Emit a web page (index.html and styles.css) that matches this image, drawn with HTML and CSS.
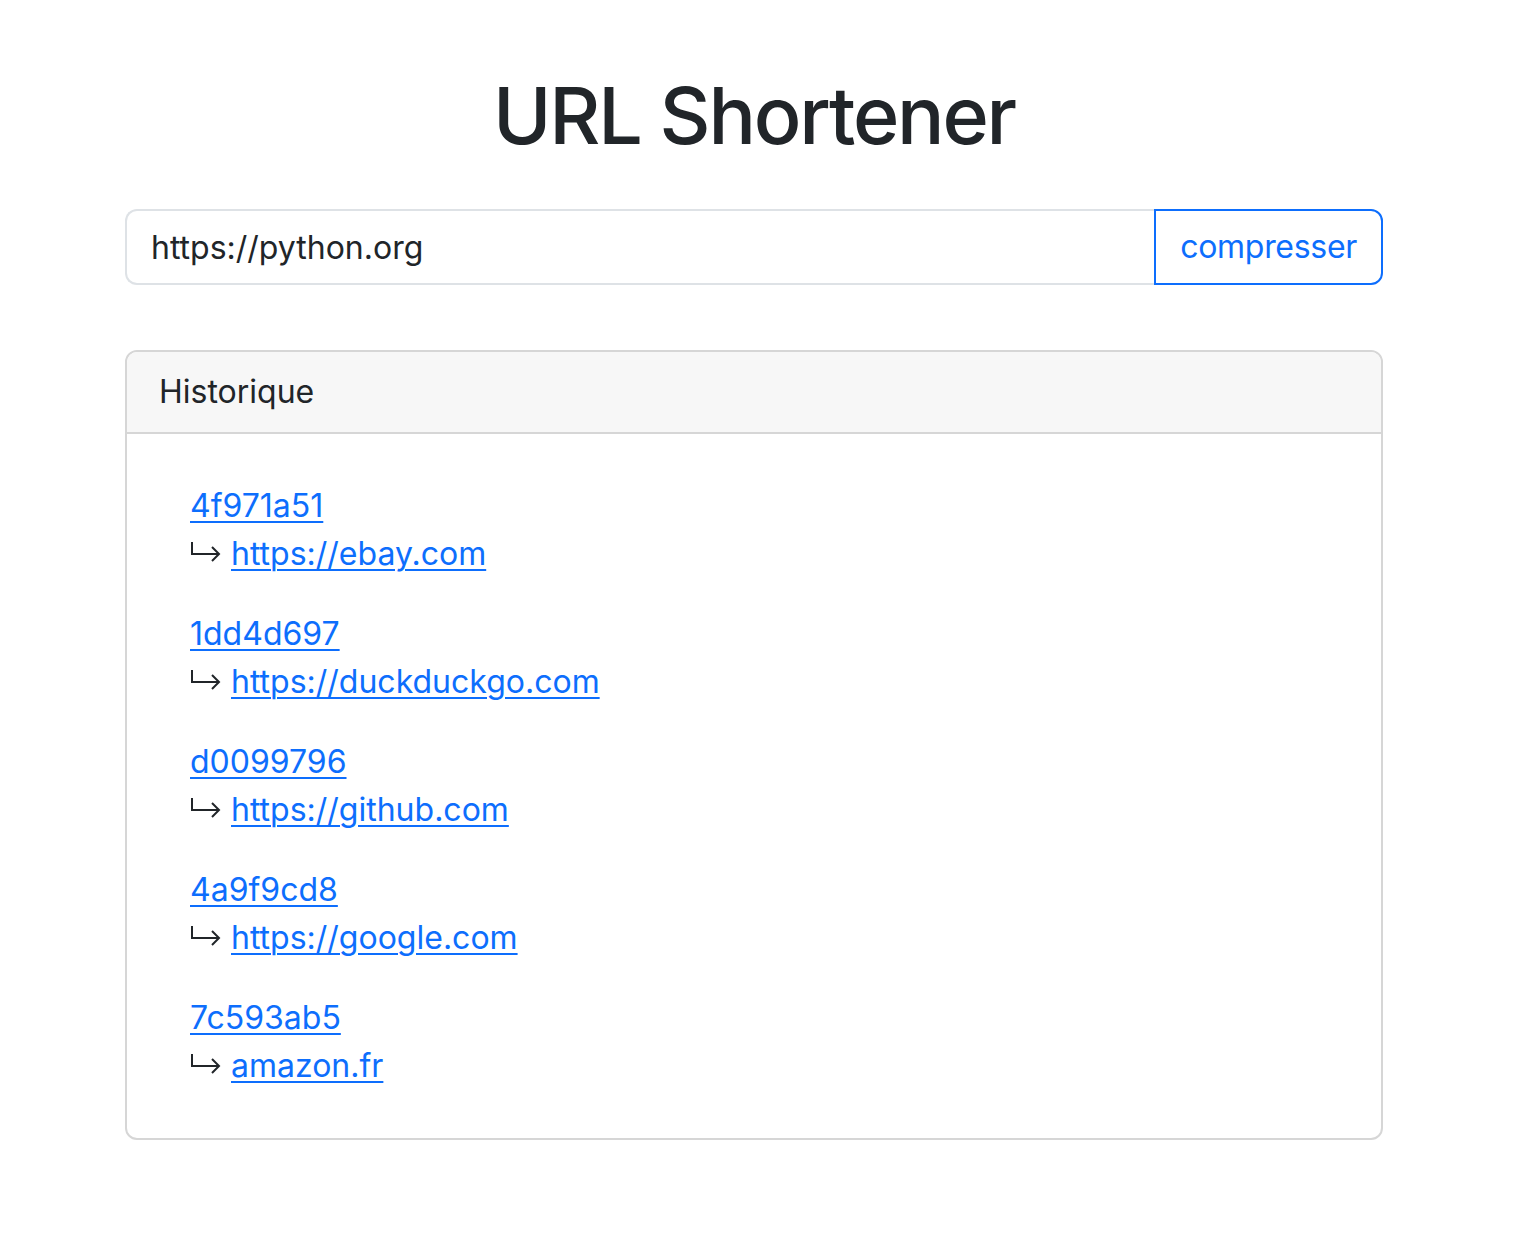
FILE: index.html
```html
<!DOCTYPE html>
<html lang="fr">
<head>
<meta charset="utf-8">
<title>URL Shortener</title>
<link rel="stylesheet" href="styles.css">
</head>
<body>
<main class="container">
  <h1 class="title">URL Shortener</h1>
  <form class="input-group">
    <input class="url-input" type="text" value="https://python.org">
    <button class="btn" type="button">compresser</button>
  </form>
  <section class="card">
    <div class="card-header">Historique</div>
    <div class="card-body">
      <ul class="history">
        <li class="item">
          <a href="#">4f971a51</a>
          <div class="target"><svg class="arrow" width="31" height="24" viewBox="0 0 31 24"><path d="M2 0 V12 H29 M22 5 L29 12 L22 19" fill="none" stroke="#212529" stroke-width="2"/></svg><a href="#">https://ebay.com</a></div>
        </li>
        <li class="item">
          <a href="#">1dd4d697</a>
          <div class="target"><svg class="arrow" width="31" height="24" viewBox="0 0 31 24"><path d="M2 0 V12 H29 M22 5 L29 12 L22 19" fill="none" stroke="#212529" stroke-width="2"/></svg><a href="#">https://duckduckgo.com</a></div>
        </li>
        <li class="item">
          <a href="#">d0099796</a>
          <div class="target"><svg class="arrow" width="31" height="24" viewBox="0 0 31 24"><path d="M2 0 V12 H29 M22 5 L29 12 L22 19" fill="none" stroke="#212529" stroke-width="2"/></svg><a href="#">https://github.com</a></div>
        </li>
        <li class="item">
          <a href="#">4a9f9cd8</a>
          <div class="target"><svg class="arrow" width="31" height="24" viewBox="0 0 31 24"><path d="M2 0 V12 H29 M22 5 L29 12 L22 19" fill="none" stroke="#212529" stroke-width="2"/></svg><a href="#">https://google.com</a></div>
        </li>
        <li class="item">
          <a href="#">7c593ab5</a>
          <div class="target"><svg class="arrow" width="31" height="24" viewBox="0 0 31 24"><path d="M2 0 V12 H29 M22 5 L29 12 L22 19" fill="none" stroke="#212529" stroke-width="2"/></svg><a href="#">amazon.fr</a></div>
        </li>
      </ul>
    </div>
  </section>
</main>
</body>
</html>
```

FILE: styles.css
```css
* { box-sizing: border-box; }
html, body { margin: 0; padding: 0; background: #fff; }
body {
  font-family: Inter, "Noto Sans", "Liberation Sans", sans-serif;
  font-size: 32px;
  line-height: 48px;
  color: #212529;
}
.container {
  width: 1258px;
  margin-left: 125px;
  padding-top: 67px;
}
.title {
  margin: 0 0 46px;
  font-size: 79px;
  line-height: 96px;
  font-weight: 500;
  text-align: center;
  letter-spacing: -2.2px;
}
.input-group {
  display: flex;
  margin: 0 0 65px;
}
.url-input {
  flex: 1;
  min-width: 0;
  height: 76px;
  padding: 12px 24px;
  font: inherit;
  color: #212529;
  border: 2px solid #dee2e6;
  border-right: none;
  border-radius: 12px 0 0 12px;
  background: #fff;
  outline: none;
}
.btn {
  height: 76px;
  padding: 12px 24px 12px 24px;
  font: inherit;
  letter-spacing: -0.3px;
  color: #0d6efd;
  background: #fff;
  border: 2px solid #0d6efd;
  border-radius: 0 12px 12px 0;
}
.card {
  border: 2px solid #d6d6d6;
  border-radius: 12px;
  overflow: hidden;
}
.card-header {
  padding: 16px 32px;
  background: #f7f7f7;
  border-bottom: 2px solid #d6d6d6;
}
.card-body {
  padding: 32px 32px;
}
.history {
  list-style: none;
  margin: 0;
  padding: 0 0 0 31px;
}
.item {
  padding: 16px 0;
}
.item a {
  color: #0d6efd;
  text-decoration: underline;
  text-decoration-thickness: 2px;
  text-underline-offset: 4px;
}
.target {
  display: flex;
  align-items: center;
}
.arrow {
  display: block;
  margin: 0 10px 0 0;
  flex: none;
}
```
